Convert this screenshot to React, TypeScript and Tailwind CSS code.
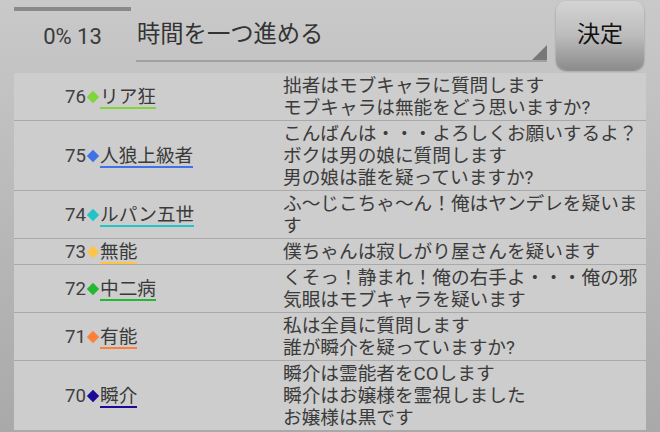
import React from "react";

type Row = { no: number; name: string; color: string; lines: string };

const rows: Row[] = [
  { no: 76, name: "リア狂", color: "#7ed63a", lines: "拙者はモブキャラに質問します\nモブキャラは無能をどう思いますか?" },
  { no: 75, name: "人狼上級者", color: "#3f72e6", lines: "こんばんは・・・よろしくお願いするよ？\nボクは男の娘に質問します\n男の娘は誰を疑っていますか?" },
  { no: 74, name: "ルパン五世", color: "#22c4c8", lines: "ふ〜じこちゃ〜ん！俺はヤンデレを疑います" },
  { no: 73, name: "無能", color: "#ffc446", lines: "僕ちゃんは寂しがり屋さんを疑います" },
  { no: 72, name: "中二病", color: "#22b832", lines: "くそっ！静まれ！俺の右手よ・・・俺の邪気眼はモブキャラを疑います" },
  { no: 71, name: "有能", color: "#ff7f3a", lines: "私は全員に質問します\n誰が瞬介を疑っていますか?" },
  { no: 70, name: "瞬介", color: "#1a0a96", lines: "瞬介は霊能者をCOします\n瞬介はお嬢様を霊視しました\nお嬢様は黒です" },
];

export default function App() {
  return (
    <div
      className="w-[660px] h-[432px] overflow-hidden bg-linear-to-b from-[#c9c9c9] to-[#a9a9a9] text-[#3b3b3b]"
      style={{ fontFamily: 'Roboto, "Noto Sans CJK JP", sans-serif' }}
    >
      <div className="flex items-start h-[73px]">
        <div className="ml-[14px] w-[117px] flex flex-col">
          <div className="mt-[7px] h-[4px] bg-[#8a8a8a]" />
          <div className="mt-[13px] text-center text-[22px] leading-[26px] text-[#3a3a3a]">0% 13</div>
        </div>
        <div className="relative ml-[5px] w-[411px] h-[62px] border-b-2 border-[#a0a0a0] pt-[20px] pl-[1px] text-[23.3px] leading-[28px] text-[#333]">
          時間を一つ進める
          <svg className="absolute right-0 bottom-0" width="15" height="15" viewBox="0 0 15 15">
            <polygon points="15,0 15,15 0,15" fill="#777" />
          </svg>
        </div>
        <button className="ml-[9px] mt-[1px] w-[88px] h-[69px] rounded-[10px] bg-linear-to-b from-[#d4d4d4] via-[#bcbcbc] to-[#8c8c8c] shadow-[0_1px_2px_rgba(0,0,0,0.35)] text-[23px] leading-[28px] text-[#111] flex items-center justify-center pb-[1px]">
          決定
        </button>
      </div>
      <div className="mx-[14px] bg-[#cdcdcd]">
        {rows.map((r) => (
          <div key={r.no} className="flex border-b border-[#a9a9a9]">
            <div className="w-[269px] shrink-0 flex items-center pl-[51px] text-[18.67px] leading-[22px]">
              <span className="text-[#404040]">{r.no}</span>
              <svg width="14" height="14" viewBox="0 0 14 14" className="shrink-0">
                <polygon points="7,0.8 13.2,7 7,13.2 0.8,7" fill={r.color} />
              </svg>
              <span
                className="inline-block leading-[20px] border-b-2 text-[#3a3a3a] mt-[2px]"
                style={{ borderColor: r.color }}
              >
                {r.name}
              </span>
            </div>
            <div className="flex-1 pt-[2px] pb-[1px] text-[18.67px] leading-[22px] whitespace-pre-line">
              {r.lines}
            </div>
          </div>
        ))}
      </div>
    </div>
  );
}
